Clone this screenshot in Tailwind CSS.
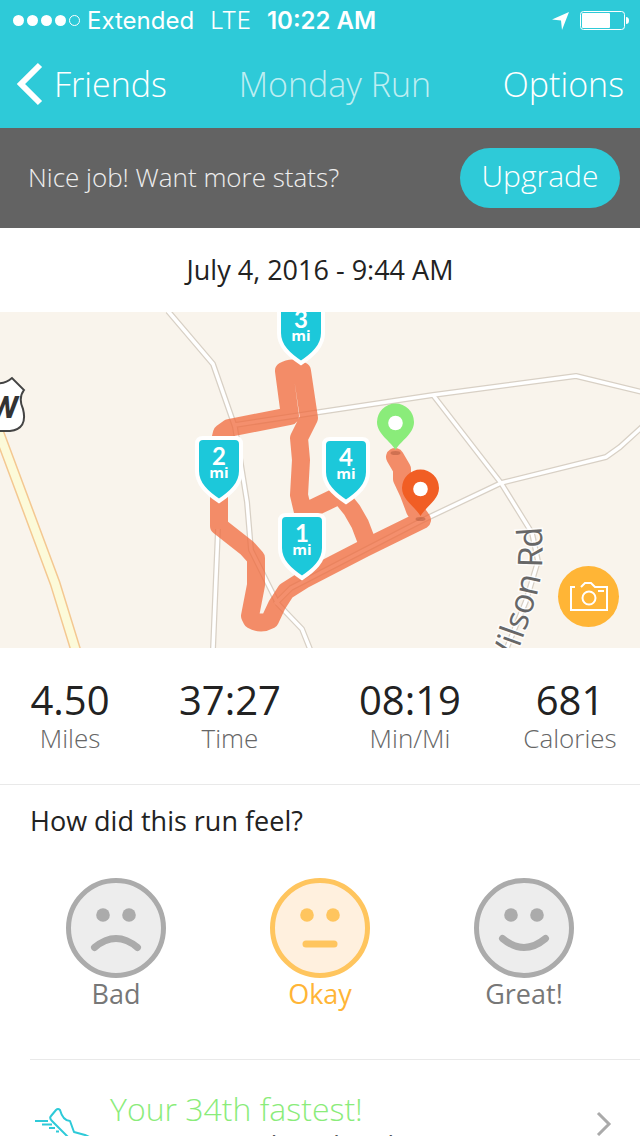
<!DOCTYPE html>
<html lang="en">
<head>
<meta charset="utf-8">
<meta name="viewport" content="width=device-width, initial-scale=1">
<title>Monday Run</title>
<script src="https://cdn.jsdelivr.net/npm/@tailwindcss/browser@4"></script>
</head>
<body class="h-screen overflow-hidden bg-white font-['Open_Sans',sans-serif] text-[#222222] flex flex-col">
<header class="shrink-0 bg-[#2ecad8] text-white">
  <div class="flex h-10 items-center pl-3 pr-2.5 pt-0.5 text-2xl font-['Inter',sans-serif]">
    <svg class="h-4 w-[69px] shrink-0" viewBox="0 0 69 16" fill="#fff" aria-hidden="true"><circle cx="6.500" cy="7.500" r="5.500"/><circle cx="20.500" cy="7.500" r="5.500"/><circle cx="34.500" cy="7.500" r="5.500"/><circle cx="48.500" cy="7.500" r="5.500"/><circle cx="62.500" cy="7.500" r="5" fill="none" stroke="#fff"/></svg>
    <span class="ml-1.5">Extended</span>
    <span class="ml-4 font-light">LTE</span>
    <span class="ml-4 font-semibold">10:22 AM</span>
    <svg class="ml-auto h-5 w-5" viewBox="0 0 20 20" fill="#fff" aria-hidden="true"><path d="M17 1 0 8.500l9 1L10 19z"/></svg>
    <svg class="ml-2 h-5 w-[50px]" viewBox="0 0 50 20" aria-hidden="true"><rect x=".5" y=".5" width="44" height="18" rx="3" fill="none" stroke="#fff"/><rect x="2" y="2" width="28" height="15" rx="1" fill="#fff"/><path d="M46 6q3 0 3 3.500T46 13z" fill="#fff"/></svg>
  </div>
  <nav class="flex h-22 items-center justify-between px-4 text-[34px] font-light">
    <a href="#friends" class="flex items-center gap-2.5"><svg class="h-11 w-7" viewBox="0 0 28 44" fill="none" stroke="#fff" stroke-width="6" aria-hidden="true"><path d="M24 3 5 22l19 19"/></svg>Friends</a>
    <h1 class="text-white/70">Monday Run</h1>
    <button type="button">Options</button>
  </nav>
</header>
<main class="flex-1">
  <section class="flex h-25 items-center justify-between bg-[#636363] pl-7 pr-5 text-white">
    <p class="pb-0.5 text-[26px] font-light text-white/90">Nice job! Want more stats?</p>
    <button type="button" class="h-15 w-40 rounded-full bg-[#2ecad8] pb-1 text-3xl font-light">Upgrade</button>
  </section>
  <p class="flex h-21 items-center justify-center text-[27px]">July 4, 2016 - 9:44 AM</p>
  <section class="relative h-84 overflow-hidden bg-[#f9f4ec]" aria-label="Route map">
    <svg class="block h-full w-full" viewBox="0 312 640 336" preserveAspectRatio="xMidYMid slice" font-family="Lato, sans-serif">
      <defs>
        <g id="roads" fill="none" stroke-linejoin="round">
          <path d="M168 311 213 364l22 63 12 75 4 48 27 54 24 25 8 20M218 529l-5 120M235 425l85-13 113-17 143-19 66 16M433 395l68 88 31 50 6 28-12 40-20 49M642 427l-22 20-14 10-105 26-80 38-130 67-16 16"/>
        </g>
        <path id="shield" d="M-16-29h32q6 0 6 6V4C22 17 12 26 0 34-12 26-22 17-22 4v-27q0-6 6-6z"/>
      </defs>
      <use href="#roads" stroke="#d8d0c5" stroke-width="6"/>
      <use href="#roads" stroke="#fff" stroke-width="3.500"/>
      <path d="M-8 414 55 583l21 68" fill="none" stroke="#f4c891" stroke-width="11"/>
      <path d="M-8 414 55 583l21 68" fill="none" stroke="#fcfad9" stroke-width="8"/>
      <path d="M-8 383q12 2 20-5l12 12q-6 8-1 19 5 20-13 22H-8z" fill="#fff" stroke="#444" stroke-width="2"/>
      <text x="18" y="418" text-anchor="end" font-size="32" font-family="Roboto, sans-serif" font-weight="700" font-style="italic" fill="#333">W</text>
      <path d="M395 457 402 469V479L409 494 415 510 422 520 365 548 305 579 286 591 277 605 270 620Q261 625 252 620L250 616 256 585V558L247 548 219 526V445L222 433 229 428 290 416 284 371Q292 366 302 371L309 418 299 438 301 460 299 495 303 512 313 508 340 495 352 510 360 524 368 545" fill="none" stroke="#f0693c" stroke-opacity=".75" stroke-width="18" stroke-linecap="round" stroke-linejoin="round"/>
      <g stroke="#fff" stroke-width="4" fill="#1cc8da">
        <use href="#shield" x="301" y="329"/><use href="#shield" x="219" y="467"/><use href="#shield" x="346" y="468"/><use href="#shield" x="302" y="544"/>
      </g>
      <g fill="#fff" font-weight="700" text-anchor="middle">
        <g font-size="24"><text x="301" y="328">3</text><text x="219" y="465">2</text><text x="346" y="466">4</text><text x="302" y="542">1</text></g>
        <g font-size="15" font-family="Open Sans"><text x="301" y="341">mi</text><text x="219" y="478">mi</text><text x="346" y="479">mi</text><text x="302" y="555">mi</text></g>
      </g>
      <g fill-opacity=".3" fill="#81341e"><ellipse cx="395.500" cy="453" rx="5" ry="2"/><ellipse cx="420.500" cy="519" rx="5" ry="2"/></g>
      <path d="M395.500 450c-5-9-18.500-16-18.500-28a18.500 18.500 0 0 1 37 0c0 12-13.500 19-18.500 28z" fill="#8aec7a"/><circle cx="395.500" cy="423" r="7.300" fill="#fff"/>
      <path d="M420.500 516c-5-9-18.500-16-18.500-28a18.500 18.500 0 0 1 37 0c0 12-13.500 19-18.500 28z" fill="#f15e24"/><circle cx="420.500" cy="489" r="7.300" fill="#fff"/>
      <path id="road-name" d="M494 724 520 646Q531 616 538 590 545 562 541 526" fill="none"/>
      <text font-size="34" font-family="Open Sans" fill="#676767" stroke="#fff" stroke-opacity=".8" stroke-width="3" paint-order="stroke" text-anchor="end"><textPath href="#road-name" startOffset="100%">Wilson Rd</textPath></text>
    </svg>
    <button type="button" aria-label="Add photo" class="absolute bottom-[21px] right-[21px] flex h-[61px] w-[61px] items-center justify-center rounded-full bg-[#ffb536]">
      <svg class="h-[30px] w-10" viewBox="0 0 40 30" fill="none" stroke="#fff" stroke-width="2" aria-hidden="true"><path d="M6 5H2v23h36V5H26l-4-4h-6l-4 4M29 9h6"/><circle cx="20" cy="16" r="6.500"/></svg>
    </button>
  </section>
  <section class="grid h-[137px] grid-cols-[140fr_180fr_180fr_140fr] border-b border-[#e9e9e9] pt-8 text-center">
    <div><p class="text-[40px] leading-10">4.50</p><p class="text-[26px] leading-9 font-light text-[#666666]">Miles</p></div>
    <div><p class="text-[40px] leading-10">37:27</p><p class="text-[26px] leading-9 font-light text-[#666666]">Time</p></div>
    <div><p class="text-[40px] leading-10">08:19</p><p class="text-[26px] leading-9 font-light text-[#666666]">Min/Mi</p></div>
    <div><p class="text-[40px] leading-10">681</p><p class="text-[26px] leading-9 font-light text-[#666666]">Calories</p></div>
  </section>
  <section class="h-[274px] text-[27px]">
    <h2 class="px-[30px] pt-4 leading-10">How did this run feel?</h2>
    <div class="mt-[37px] flex justify-between px-[66px] leading-8 text-[#777777]">
      <button type="button" class="flex w-25 flex-col items-center"><svg class="h-25 w-25" viewBox="0 0 100 100" fill="none" stroke="#ababab" stroke-width="5" aria-hidden="true"><circle cx="50" cy="50" r="47.500" fill="#ededed"/><g fill="#ababab" stroke="none"><circle cx="37" cy="37" r="6.800"/><circle cx="63" cy="37" r="6.800"/></g><path d="M28.500 69.500q21.500-18 43 0" stroke-width="7" stroke-linecap="round"/></svg>Bad</button>
      <button type="button" aria-pressed="true" class="flex w-25 flex-col items-center text-[#ffb536]"><svg class="h-25 w-25" viewBox="0 0 100 100" fill="none" stroke="#ffc55e" stroke-width="5" aria-hidden="true"><circle cx="50" cy="50" r="47.500" fill="#fff0de"/><g fill="#ffc55e" stroke="none"><circle cx="37" cy="37" r="6.800"/><circle cx="63" cy="37" r="6.800"/></g><path d="M36 66h28" stroke-width="7" stroke-linecap="round"/></svg>Okay</button>
      <button type="button" class="flex w-25 flex-col items-center"><svg class="h-25 w-25" viewBox="0 0 100 100" fill="none" stroke="#ababab" stroke-width="5" aria-hidden="true"><circle cx="50" cy="50" r="47.500" fill="#ededed"/><g fill="#ababab" stroke="none"><circle cx="37" cy="37" r="6.800"/><circle cx="63" cy="37" r="6.800"/></g><path d="M28.500 60.500q21.500 18 43 0" stroke-width="7" stroke-linecap="round"/></svg>Great!</button>
    </div>
  </section>
  <a href="#fastest" class="ml-[30px] flex items-start border-t border-[#e9e9e9] pr-7">
    <svg class="mt-12 h-14 w-15 shrink-0" viewBox="30 1108 60 56" fill="none" stroke="#2ecad8" stroke-width="2" aria-hidden="true"><path d="M35 1121h13m-6 3.500h10m-3 3.500h6m1 3.500h3"/><path d="m96 1140-11-5-11-3-4-11q-7 0-10-11-2-2-4 0l-5 6q-2 2 1 5l16 16 16 13h12z" stroke-linejoin="round"/></svg>
    <div class="ml-5 mt-[31px] flex-1"><p class="text-[32px] leading-9 font-light text-[#8aec7a]">Your 34th fastest!</p><p class="text-[26px] leading-[34px] text-[#555555]">See your total Goal rank</p></div>
    <svg class="mt-12 h-8 w-4" viewBox="0 0 16 32" fill="none" stroke="#aaa" stroke-width="3" aria-hidden="true"><path d="m2 5 11 11L2 27"/></svg>
  </a>
</main>
</body>
</html>
